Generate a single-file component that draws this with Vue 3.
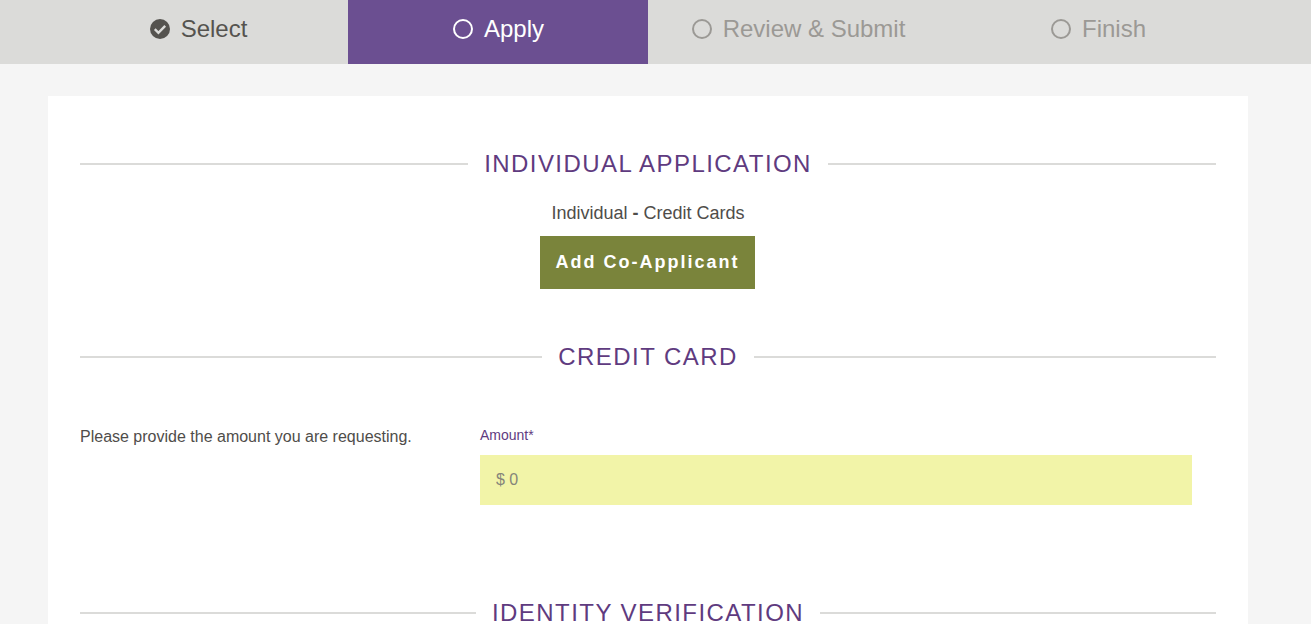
<script setup>
const steps = [
  { label: "Select", state: "done" },
  { label: "Apply", state: "active" },
  { label: "Review & Submit", state: "todo" },
  { label: "Finish", state: "todo" },
];
</script>

<template>
  <div class="page">
    <nav class="steps">
      <div class="steps-inner">
        <div
          v-for="step in steps"
          :key="step.label"
          class="step"
          :class="'step-' + step.state"
        >
          <svg class="step-icon" viewBox="0 0 20 20" width="20" height="20">
            <template v-if="step.state === 'done'">
              <circle cx="10" cy="10" r="10" fill="currentColor" />
              <path d="M4.8 10.2l3.6 3.6 6.8-7" fill="none" stroke="#dbdbd9" stroke-width="2.4" />
            </template>
            <circle v-else cx="10" cy="10" r="9" fill="none" stroke="currentColor" stroke-width="2" />
          </svg>
          <span>{{ step.label }}</span>
        </div>
      </div>
    </nav>

    <main class="card">
      <h2 class="heading"><span>INDIVIDUAL APPLICATION</span></h2>
      <div class="applicant">
        <p>Individual <b>-</b> Credit Cards</p>
        <button class="add-btn">Add Co-Applicant</button>
      </div>

      <h2 class="heading heading-credit"><span>CREDIT CARD</span></h2>
      <div class="amount-row">
        <p class="amount-text">Please provide the amount you are requesting.</p>
        <div class="amount-field">
          <label class="amount-label">Amount*</label>
          <input class="amount-input" placeholder="$ 0" />
        </div>
      </div>

      <h2 class="heading heading-identity"><span>IDENTITY VERIFICATION</span></h2>
    </main>
  </div>
</template>

<style>
html,
body {
  margin: 0;
  overflow: hidden;
}
</style>

<style scoped>
.page {
  height: 624px;
  overflow: hidden;
  background: #f5f5f5;
  font-family: "Liberation Sans", Arial, sans-serif;
  color: #4f4d4a;
}

.steps {
  background: #dbdbd9;
  height: 64px;
}

.steps-inner {
  width: 1200px;
  margin-left: 48px;
  display: grid;
  grid-template-columns: repeat(4, 300px);
  height: 100%;
}

.step {
  display: flex;
  align-items: center;
  justify-content: center;
  gap: 11px;
  font-size: 24px;
  padding: 0 0 6px 1px;
  box-sizing: border-box;
}

.step-done {
  color: #55534f;
}

.step-active {
  background: #6b4f91;
  color: #fff;
}

.step-todo {
  color: #9b9995;
}

.step-icon {
  flex: none;
}

.card {
  width: 1136px;
  margin: 32px 0 0 48px;
  padding: 52px 32px 0;
  background: #fff;
}

.heading {
  display: flex;
  align-items: center;
  margin: 0;
  height: 32px;
  font-size: 24px;
  font-weight: 400;
  letter-spacing: 1.44px;
  color: #5f3b7f;
}

.heading::before,
.heading::after {
  content: "";
  flex: 1;
  height: 2px;
  background: #dbdbd9;
}

.heading span {
  padding: 0 16px;
}

.applicant {
  text-align: center;
  margin-top: 20px;
}

.applicant p {
  margin: 0;
  font-size: 18px;
  line-height: 26px;
}

.add-btn {
  display: block;
  margin: 10px 0 0 460px;
  width: 215px;
  height: 53px;
  padding: 0;
  border: 0;
  background: #7a843b;
  color: #fff;
  font-family: inherit;
  font-size: 18px;
  font-weight: 700;
  letter-spacing: 2px;
}

.heading-credit {
  margin-top: 52px;
}

.amount-row {
  display: flex;
  margin-top: 52px;
}

.amount-text {
  width: 400px;
  margin: 0;
  font-size: 16px;
  line-height: 24px;
}

.amount-field {
  width: 712px;
}

.amount-label {
  display: block;
  font-size: 14px;
  line-height: 20px;
  color: #5f3b7f;
}

.amount-input {
  display: block;
  box-sizing: border-box;
  width: 100%;
  height: 50px;
  margin-top: 10px;
  padding: 0 16px;
  border: 0;
  background: #f2f4a8;
  font-family: inherit;
  font-size: 16px;
}

.amount-input::placeholder {
  color: #85857a;
  opacity: 1;
}

.heading-identity {
  margin-top: 92px;
}
</style>
